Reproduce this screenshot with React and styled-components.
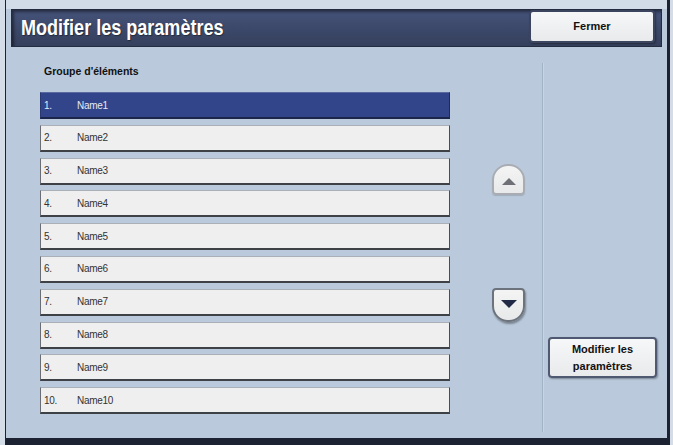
import React from "react";
import styled, { createGlobalStyle } from "styled-components";

const GlobalStyle = createGlobalStyle`
  body {
    margin: 0;
    background: #d3dce7;
    font-family: "Liberation Sans", Arial, sans-serif;
  }
`;

const Frame = styled.div`
  box-sizing: border-box;
  width: 665px;
  height: 445px;
  margin-left: 5px;
  display: flex;
  flex-direction: column;
  padding-top: 9px;
  border-left: 1px solid #1c2232;
  border-right: 3px solid #1c2232;
  border-bottom: 7px solid #1c2232;
  background: linear-gradient(#d2dce8 9px, #bacadc 9px);
`;

const Header = styled.div`
  box-sizing: border-box;
  height: 38px;
  margin: 0 5px;
  display: flex;
  justify-content: space-between;
  padding-left: 9px;
  background: linear-gradient(#46537a, #3b4767 60%, #35405d);
  border: 1px solid #242c42;
  box-shadow: inset 2px 2px 3px rgba(0, 0, 0, 0.45);
`;

const Title = styled.h1`
  margin: 0;
  align-self: center;
  color: #fff;
  font-size: 22px;
  font-weight: bold;
  white-space: nowrap;
  transform: scaleX(0.82);
  transform-origin: left center;
  text-shadow: 1px 1px 1px rgba(0, 0, 0, 0.4);
`;

const Button = styled.button`
  box-sizing: border-box;
  width: ${(p) => p.$w}px;
  height: ${(p) => p.$h}px;
  margin: 0;
  padding: 0;
  background: linear-gradient(#f6f7f8, #e8eaec);
  border: 2px solid #4f5971;
  border-radius: 4px;
  box-shadow: 1px 1px 2px rgba(0, 0, 0, 0.35);
  font-family: "Liberation Sans", Arial, sans-serif;
  font-weight: bold;
  font-size: 11px;
  line-height: 17px;
  color: #111;
`;

const CloseButton = styled(Button)`
  margin-right: 6px;
  border-color: #3c4560;
`;

const Body = styled.div`
  flex: 1;
  display: grid;
  grid-template-columns: 444px 92px 1px 1fr;
`;

const ListCol = styled.div`
  padding-left: 34px;
`;

const Label = styled.div`
  margin-top: 15px;
  line-height: 18px;
  font-size: 10.5px;
  font-weight: bold;
  color: #111;
  padding-left: 4px;
`;

const List = styled.div`
  margin-top: 12px;
  width: 410px;
  display: flex;
  flex-direction: column;
  gap: 5.8px;
`;

const Row = styled.div`
  box-sizing: border-box;
  height: 27px;
  display: flex;
  align-items: center;
  padding-left: 3px;
  font-size: 10px;
  letter-spacing: -0.3px;
  background: ${(p) => (p.$selected ? "#33458a" : "#efefef")};
  color: ${(p) => (p.$selected ? "#e6e9f2" : "#333")};
  border-top: 1px solid ${(p) => (p.$selected ? "#5b6a9e" : "#aab0b8")};
  border-left: 1px solid ${(p) => (p.$selected ? "#2a396f" : "#6a6e74")};
  border-right: 1px solid ${(p) => (p.$selected ? "#1f2a55" : "#4a4d52")};
  border-bottom: 2px solid ${(p) => (p.$selected ? "#1c254a" : "#3e4146")};
`;

const Num = styled.span`
  width: 33px;
`;

const ArrowCol = styled.div`
  display: flex;
  flex-direction: column;
  padding: 117px 0 0 42px;
`;

const ArrowButton = styled.div`
  box-sizing: border-box;
  width: 33px;
  height: ${(p) => (p.$up ? 31 : 34)}px;
  margin-top: ${(p) => (p.$up ? 0 : 93)}px;
  display: flex;
  align-items: center;
  justify-content: center;
  background: linear-gradient(#f4f4f4, #e8e9ea);
  border: 2px solid ${(p) => (p.$up ? "#a9adb3" : "#6c737d")};
  border-radius: ${(p) => (p.$up ? "16px 16px 4px 4px" : "4px 4px 16px 16px")};
  box-shadow: ${(p) =>
    p.$up ? "0 1px 1px rgba(0,0,0,0.15)" : "1px 2px 2px rgba(0,0,0,0.35)"};
`;

const Triangle = styled.div`
  width: 0;
  height: 0;
  border-left: ${(p) => (p.$up ? 7 : 8)}px solid transparent;
  border-right: ${(p) => (p.$up ? 7 : 8)}px solid transparent;
  ${(p) =>
    p.$up
      ? "border-bottom: 7px solid #6e7075; margin-top: 3px;"
      : "border-top: 8px solid #222b45; margin-bottom: 3px;"}
`;

const Divider = styled.div`
  background: #a3b3c6;
  margin: 16px 0 6px;
  box-shadow: 1px 0 0 #c8d4e2;
`;

const RightCol = styled.div`
  padding: 290px 0 0 5px;
`;

const names = Array.from({ length: 10 }, (_, i) => i + 1);

export default function App() {
  return (
    <>
      <GlobalStyle />
      <Frame>
        <Header>
          <Title>Modifier les paramètres</Title>
          <CloseButton $w={126} $h={33}>Fermer</CloseButton>
        </Header>
        <Body>
          <ListCol>
            <Label>Groupe d'éléments</Label>
            <List>
              {names.map((n) => (
                <Row key={n} $selected={n === 1}>
                  <Num>{n}.</Num>
                  <span>Name{n}</span>
                </Row>
              ))}
            </List>
          </ListCol>
          <ArrowCol>
            <ArrowButton $up>
              <Triangle $up />
            </ArrowButton>
            <ArrowButton>
              <Triangle />
            </ArrowButton>
          </ArrowCol>
          <Divider />
          <RightCol>
            <Button $w={109} $h={41}>
              Modifier les
              <br />
              paramètres
            </Button>
          </RightCol>
        </Body>
      </Frame>
    </>
  );
}
